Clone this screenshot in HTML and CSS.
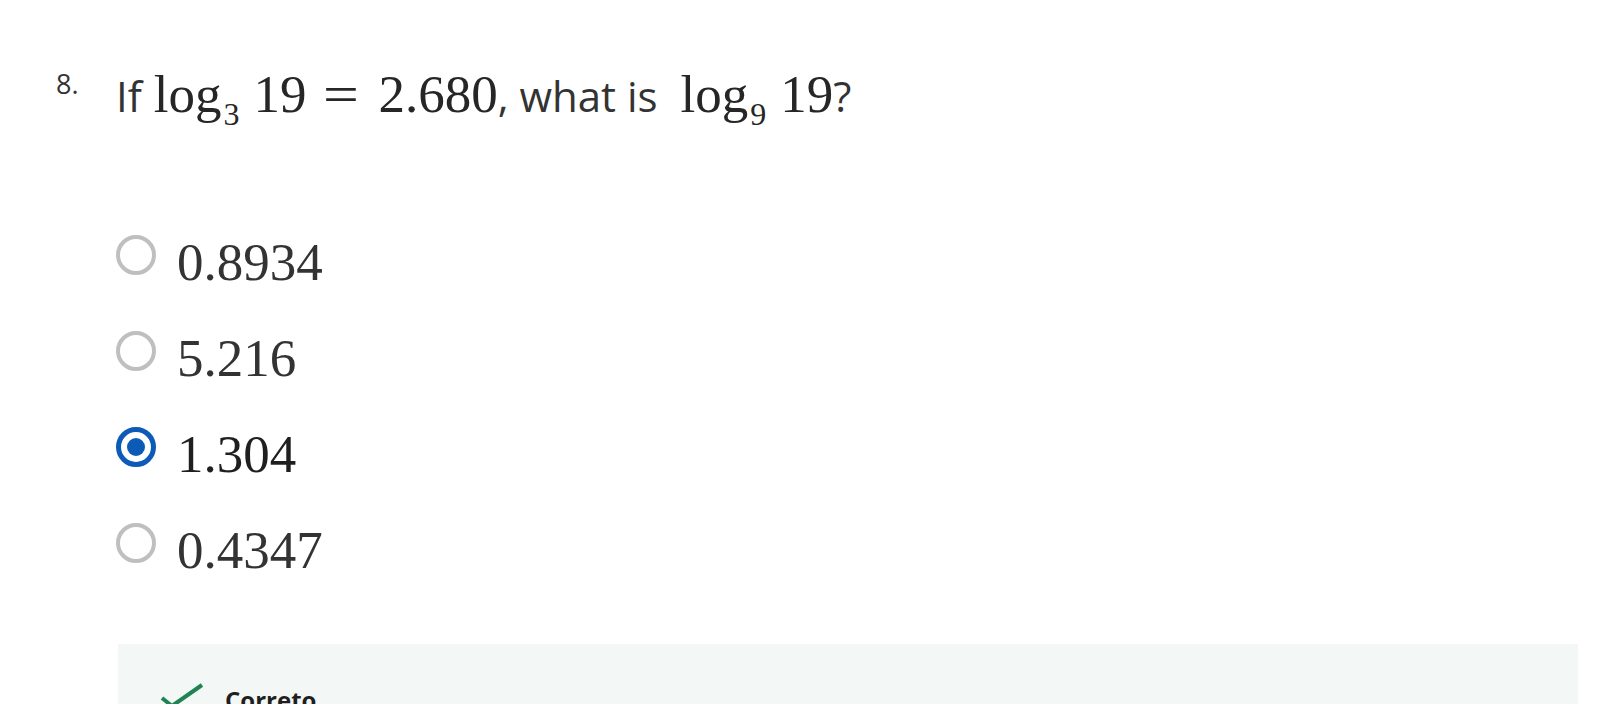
FILE: index.html
```html
<!DOCTYPE html>
<html lang="en">
<head>
<meta charset="utf-8">
<title>Question 8</title>
<link rel="stylesheet" href="styles.css">
</head>
<body>
<div class="page">
  <div class="question">
    <div class="qnum">8.</div>
    <div class="qbody">
      <p class="prompt">If <span class="math">log<span class="sub">3</span><span class="thin">19</span><span class="rel">=</span>2.680</span>, what is <span class="math second">log<span class="sub">9</span><span class="thin">19</span></span>?</p>
      <div class="options">
        <div class="option"><span class="radio"></span><span class="opt-text">0.8934</span></div>
        <div class="option"><span class="radio"></span><span class="opt-text">5.216</span></div>
        <div class="option selected"><span class="radio"><span class="dot"></span></span><span class="opt-text">1.304</span></div>
        <div class="option"><span class="radio"></span><span class="opt-text">0.4347</span></div>
      </div>
      <div class="feedback">
        <div class="fb-head">
          <svg class="check" viewBox="0 0 48 48" width="48" height="48" aria-hidden="true">
            <polyline points="6,14 16,22 46,1" fill="none" stroke="#1f8354" stroke-width="4" stroke-linecap="butt" stroke-linejoin="miter"/>
          </svg>
          <span class="fb-title">Correto</span>
        </div>
      </div>
    </div>
  </div>
</div>
</body>
</html>
```
FILE: styles.css
```css
html, body {
  margin: 0;
  padding: 0;
  background: #ffffff;
}

.page {
  padding: 66px 38px 0 56px;
}

.question {
  display: flex;
  align-items: flex-start;
}

.qnum {
  width: 60px;
  flex: none;
  font-family: "Open Sans", sans-serif;
  font-size: 27px;
  line-height: 36px;
  color: #333333;
}

.qbody {
  flex: 1;
  min-width: 0;
}

.prompt {
  margin: 0;
  font-family: "Open Sans", sans-serif;
  font-size: 42px;
  line-height: 60px;
  color: #333333;
  white-space: nowrap;
}

.math {
  margin-left: 1px;
  font-family: "Liberation Serif", serif;
  font-size: 53px;
  line-height: 1;
  color: #262626;
}

.math.second {
  margin-left: 12px;
}

.sub {
  font-size: 32px;
  line-height: 0;
  vertical-align: -13px;
  margin-left: 2px;
}

.thin {
  margin-left: 14px;
}

.rel {
  display: inline-block;
  margin: 0 23px 0 19px;
  transform: scaleX(1.2);
}

.options {
  margin-top: 104px;
  display: flex;
  flex-direction: column;
  gap: 32px;
}

.option {
  display: flex;
  align-items: flex-start;
  height: 64px;
}

.radio {
  flex: none;
  box-sizing: border-box;
  width: 40px;
  height: 40px;
  margin-top: 5px;
  border: 4px solid #bfbfbf;
  border-radius: 50%;
  display: flex;
  align-items: center;
  justify-content: center;
}

.option.selected .radio {
  border: 5px solid #0c5bb7;
}

.dot {
  width: 18px;
  height: 18px;
  border-radius: 50%;
  background: #0c5bb7;
}

.opt-text {
  margin-left: 21px;
  font-family: "Liberation Serif", serif;
  font-size: 53px;
  line-height: 64px;
  color: #333333;
}

.option.selected .opt-text {
  color: #1f1f1f;
}

.feedback {
  margin-top: 62px;
  margin-left: 2px;
  background: #f3f8f6;
  padding: 40px 38px 40px;
  min-height: 120px;
}

.fb-head {
  display: flex;
  align-items: flex-start;
  gap: 21px;
}

.check {
  flex: none;
  overflow: visible;
}

.fb-title {
  font-family: "Open Sans", sans-serif;
  font-weight: 700;
  font-size: 24px;
  line-height: 32px;
  color: #1f1f1f;
}
```
